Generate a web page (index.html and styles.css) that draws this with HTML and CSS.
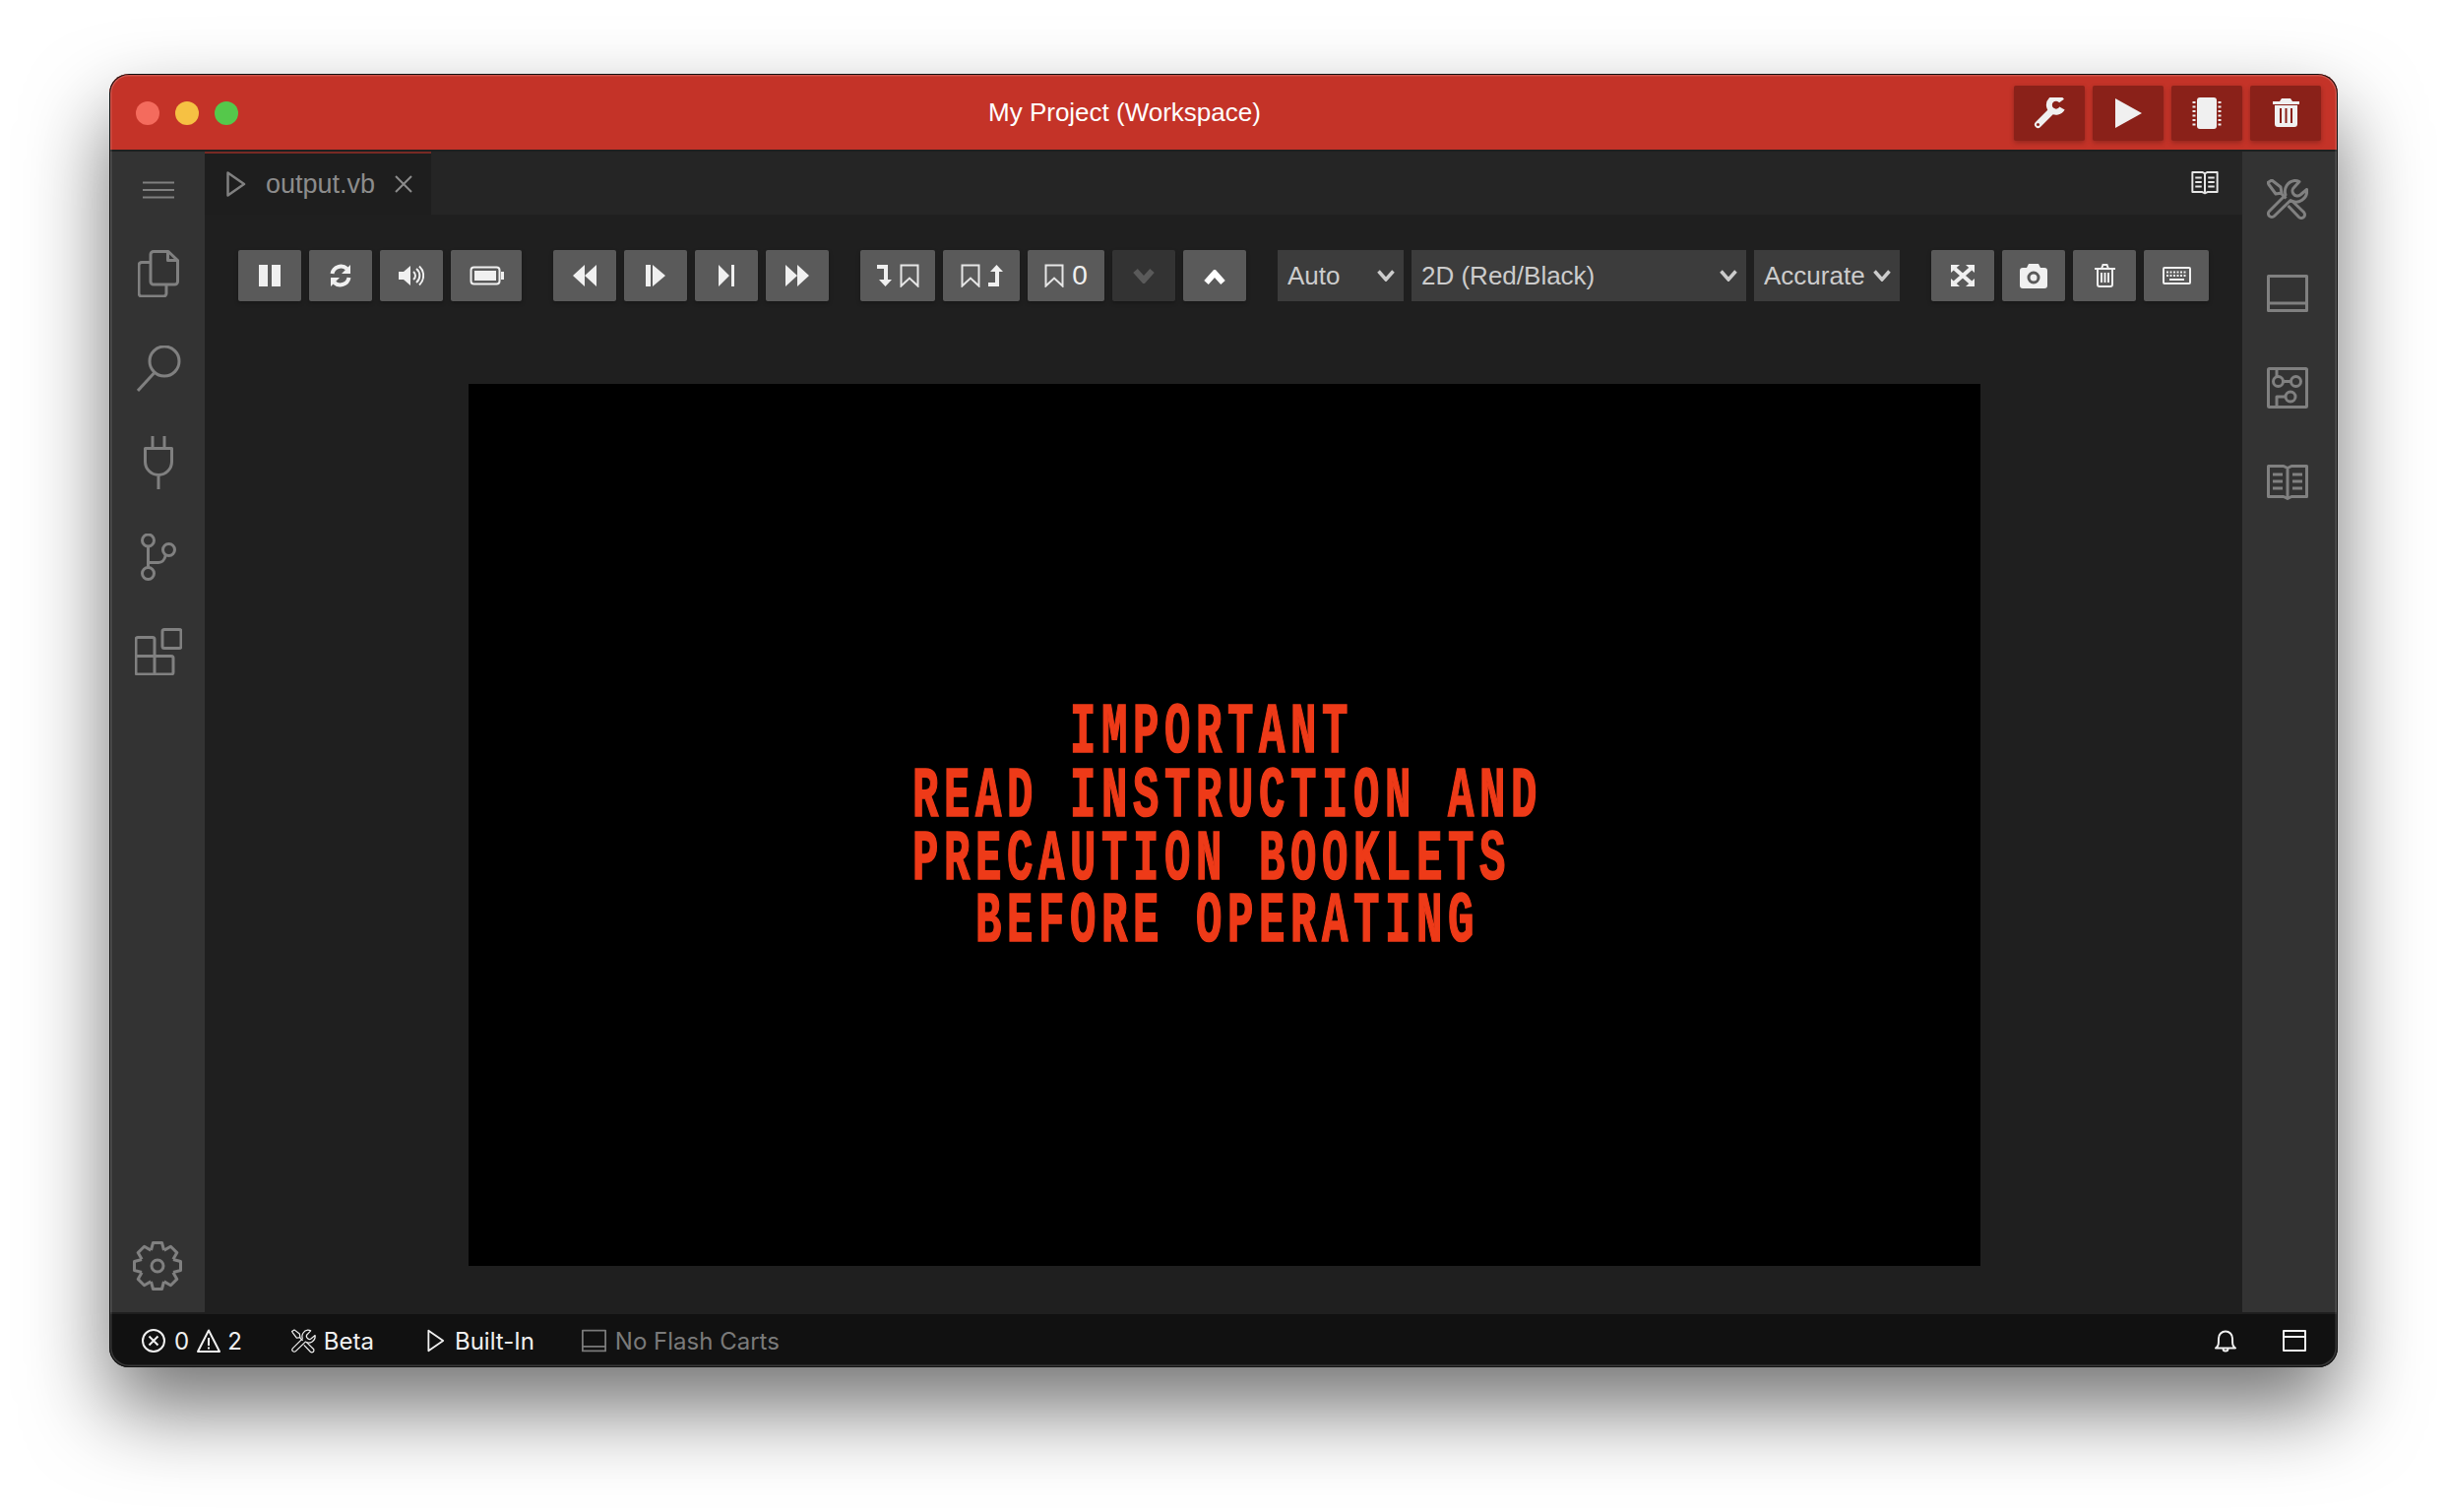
FILE: index.html
```html
<!DOCTYPE html>
<html lang="en">
<head>
    <meta charset="UTF-8">
    <meta name="viewport" content="width=device-width, initial-scale=1.0">
    <title>My Project (Workspace)</title>
    <link rel="stylesheet" href="styles.css">
</head>
<body>
    <!-- shared icons -->
    <svg class="defs" aria-hidden="true">
        <symbol id="i-tools" viewBox="0 0 42 41">
            <path d="M28 1.5A11 11 0 0 0 19 16L2.5 32.5a3.5 3.5 0 0 0 5 5L24 21.5A11 11 0 0 0 40.5 10.5L34 16a5 5 0 0 1-6-8L33 2.5A11 11 0 0 0 28 1.5Z"/>
            <path d="M1 3.5L5 1l9 7 1 6-6 1-7-9.500ZM14.500 14.500l5 5M21.500 27l11 11.500a3.500 3.500 0 0 0 5-5L26 22.500"/>
        </symbol>
        <symbol id="i-play" viewBox="0 0 20 26">
            <path d="M1.500 1.500L18 13 1.500 24.500Z"/>
        </symbol>
        <symbol id="i-panel" viewBox="0 0 42 38">
            <path d="M1.500 1.500h39v35h-39ZM1.500 29h39"/>
        </symbol>
        <symbol id="i-book" viewBox="0 0 42 37">
            <path d="M1.500 1.500H17l4 2 4-2h15.500v31H25l-4 2-4-2H1.500ZM21 3.500v31M6 10h10M6 17h10M6 24h10M26 10h10M26 17h10M26 24h10"/>
        </symbol>
        <symbol id="i-bookmark" viewBox="0 0 20 24">
            <path d="M1.500 1.500h17v21L10 14.500l-8.500 8Z"/>
        </symbol>
        <symbol id="i-chevron" viewBox="0 0 22 16">
            <path d="M2.500 3L11 12.500 19.500 3"/>
        </symbol>
    </svg>

    <div class="window">
        <header class="titlebar">
            <div class="lights">
                <span class="light light-red"></span>
                <span class="light light-yellow"></span>
                <span class="light light-green"></span>
            </div>
            <div class="title">My Project (Workspace)</div>
            <div class="title-actions">
                <button class="title-btn" type="button">
                    <svg width="32" height="32" viewBox="0 0 32 32">
                        <path class="wrench-head" d="M28.500 3.500A7 7 0 1 0 29 11"/>
                        <path class="wrench-handle" d="M17 15L4.500 27.500"/>
                        <circle class="wrench-hole" cx="4.500" cy="27.500" r="1.500"/>
                    </svg>
                </button>
                <button class="title-btn" type="button">
                    <svg width="27" height="30" viewBox="0 0 27 30"><path class="solid" d="M0 0l27 15L0 30Z"/></svg>
                </button>
                <button class="title-btn" type="button">
                    <svg width="30" height="32" viewBox="0 0 30 32">
                        <rect class="solid" x="5" y="0" width="20" height="32" rx="3"/>
                        <path class="chip-pins" d="M2 4v25M28 4v25"/>
                    </svg>
                </button>
                <button class="title-btn" type="button">
                    <svg width="27" height="29" viewBox="0 0 27 29">
                        <path class="solid" fill-rule="evenodd" d="M9 0h9l2 3h7v3H0V3h7ZM2 7h23v19a3 3 0 0 1-3 3H5a3 3 0 0 1-3-3ZM7 10v15h2V10ZM12.500 10v15h2V10ZM18 10v15h2V10Z"/>
                    </svg>
                </button>
            </div>
        </header>

        <div class="workbench">
            <nav class="activity">
                <div class="activity-item activity-menu">
                    <svg width="32" height="18" viewBox="0 0 32 18"><path d="M0 1.500h32M0 9h32M0 16.500h32"/></svg>
                </div>
                <div class="activity-item">
                    <svg width="42" height="48" viewBox="0 0 42 48">
                        <path d="M16 1.500h15l9.500 9V32a3 3 0 0 1-3 3H16a3 3 0 0 1-3-3V4.500a3 3 0 0 1 3-3ZM30.500 1.500v9h10M13 12.500H4a3 3 0 0 0-3 3V44a3 3 0 0 0 3 3h22a3 3 0 0 0 3-3v-9"/>
                    </svg>
                </div>
                <div class="activity-item">
                    <svg width="45" height="47" viewBox="0 0 45 47">
                        <circle cx="28" cy="16" r="15"/>
                        <path d="M17.500 28L1 46"/>
                    </svg>
                </div>
                <div class="activity-item">
                    <svg width="30" height="54" viewBox="0 0 30 54">
                        <path d="M9 0v12M21 0v12M1.500 12.500h27V26a13.500 13.500 0 0 1-27 0ZM15 40v14"/>
                    </svg>
                </div>
                <div class="activity-item">
                    <svg width="36" height="48" viewBox="0 0 36 48">
                        <circle cx="7.500" cy="7" r="6"/>
                        <circle cx="7.500" cy="40.500" r="6"/>
                        <circle cx="28.500" cy="16.500" r="6"/>
                        <path d="M7.500 13v21.500M8 29.500h10c4 0 6-2 7.500-8"/>
                    </svg>
                </div>
                <div class="activity-item">
                    <svg width="48" height="48" viewBox="0 0 48 48">
                        <rect x="28" y="1.500" width="19" height="19" rx="2"/>
                        <path d="M3 9.500h15a2 2 0 0 1 2 2v17h17a2 2 0 0 1 2 2V45a2 2 0 0 1-2 2H3a2 2 0 0 1-2-2V11.500a2 2 0 0 1 2-2ZM1 28.500h19V47"/>
                    </svg>
                </div>
                <div class="activity-item activity-gear">
                    <svg width="50" height="50" viewBox="-25 -25 50 50">
                        <path id="gear-tooth" d="M-6.500-16L-4.500-23.500H4.500L6.500-16"/>
                        <use href="#gear-tooth" transform="rotate(45)"/>
                        <use href="#gear-tooth" transform="rotate(90)"/>
                        <use href="#gear-tooth" transform="rotate(135)"/>
                        <use href="#gear-tooth" transform="rotate(180)"/>
                        <use href="#gear-tooth" transform="rotate(225)"/>
                        <use href="#gear-tooth" transform="rotate(270)"/>
                        <use href="#gear-tooth" transform="rotate(315)"/>
                        <circle r="6"/>
                    </svg>
                </div>
            </nav>

            <main class="editor">
                <div class="tabs">
                    <div class="tab">
                        <svg class="tab-icon" width="20" height="26"><use href="#i-play"/></svg>
                        <span class="tab-name">output.vb</span>
                        <svg class="tab-close" width="18" height="18" viewBox="0 0 18 18"><path d="M1 1l16 16M17 1L1 17"/></svg>
                    </div>
                    <svg class="tabs-book" width="28" height="24"><use href="#i-book"/></svg>
                </div>

                <div class="toolbar">
                    <div class="group">
                        <button class="btn" type="button">
                            <svg width="24" height="22" viewBox="0 0 24 22"><path class="solid" d="M1 0h9v22H1ZM14 0h9v22h-9Z"/></svg>
                        </button>
                        <button class="btn" type="button">
                            <svg width="24" height="24" viewBox="0 0 24 24">
                                <path class="line-3" d="M3.500 10a9 9 0 0 1 15-5M20.500 14a9 9 0 0 1-15 5"/>
                                <path class="solid" d="M22 1v9h-9ZM2 23v-9h9Z"/>
                            </svg>
                        </button>
                        <button class="btn" type="button">
                            <svg width="26" height="22" viewBox="0 0 26 22">
                                <path class="solid" d="M0 7h5l7-6v20l-7-6H0Z"/>
                                <path class="line-2" d="M15 7a5 5 0 0 1 0 8M18 4a9 9 0 0 1 0 14M21 1.500a13 13 0 0 1 0 19"/>
                            </svg>
                        </button>
                        <button class="btn btn-wide" type="button">
                            <svg width="35" height="20" viewBox="0 0 35 20">
                                <rect class="line-2" x="1.500" y="1.500" width="29" height="17" rx="3"/>
                                <rect class="solid" x="5" y="5" width="22" height="10"/>
                                <rect class="solid" x="32" y="6" width="3" height="8"/>
                            </svg>
                        </button>
                    </div>

                    <div class="group">
                        <button class="btn" type="button">
                            <svg width="24" height="22" viewBox="0 0 24 22"><path class="solid" d="M12 0L0 11l12 11ZM24 0L12 11l12 11Z"/></svg>
                        </button>
                        <button class="btn" type="button">
                            <svg width="20" height="22" viewBox="0 0 20 22"><path class="solid" d="M0 0h5v22H0ZM7 0l13 11L7 22Z"/></svg>
                        </button>
                        <button class="btn" type="button">
                            <svg width="16" height="22" viewBox="0 0 16 22"><path class="solid" d="M0 0l11 11L0 22ZM13 0h3v22h-3Z"/></svg>
                        </button>
                        <button class="btn" type="button">
                            <svg width="24" height="22" viewBox="0 0 24 22"><path class="solid" d="M0 0l12 11L0 22ZM12 0l12 11-12 11Z"/></svg>
                        </button>
                    </div>

                    <div class="group">
                        <button class="btn btn-bm" type="button">
                            <svg width="15" height="22" viewBox="0 0 15 22"><path class="solid" d="M0 0h11v15h4L8.500 22 2 15h5V4H0Z"/></svg>
                            <svg class="bm" width="20" height="24"><use href="#i-bookmark"/></svg>
                        </button>
                        <button class="btn btn-bm-wide" type="button">
                            <svg class="bm" width="20" height="24"><use href="#i-bookmark"/></svg>
                            <svg width="15" height="22" viewBox="0 0 15 22"><path class="solid" d="M15 7h-4v15H0v-4h7V7H2l6.500-7Z"/></svg>
                        </button>
                        <button class="btn btn-bm-wide" type="button">
                            <svg class="bm" width="20" height="24"><use href="#i-bookmark"/></svg>
                            <span class="btn-count">0</span>
                        </button>
                        <button class="btn btn-dim" type="button">
                            <svg class="chevron" width="22" height="16"><use href="#i-chevron"/></svg>
                        </button>
                        <button class="btn" type="button">
                            <svg class="chevron chevron-up" width="22" height="16"><use href="#i-chevron"/></svg>
                        </button>
                    </div>

                    <div class="group">
                        <select class="select select-auto"><option>Auto</option></select>
                        <select class="select select-mode"><option>2D (Red/Black)</option></select>
                        <select class="select select-accuracy"><option>Accurate</option></select>
                    </div>

                    <div class="group">
                        <button class="btn" type="button">
                            <svg width="24" height="22" viewBox="0 0 24 22">
                                <path class="line-3" d="M4 4l16 14M20 4L4 18"/>
                                <path class="solid" d="M0 0h9L0 8ZM24 0h-9l9 8ZM0 22h9L0 14ZM24 22h-9l9-8Z"/>
                            </svg>
                        </button>
                        <button class="btn" type="button">
                            <svg width="28" height="25" viewBox="0 0 28 25">
                                <path class="solid" fill-rule="evenodd" d="M9 0h10l2 4h4a3 3 0 0 1 3 3v15a3 3 0 0 1-3 3H3a3 3 0 0 1-3-3V7a3 3 0 0 1 3-3h4ZM14 7.500a6.500 6.500 0 1 0 0 13 6.500 6.500 0 0 0 0-13ZM14 10.500a3.500 3.500 0 1 1 0 7 3.500 3.500 0 0 1 0-7Z"/>
                            </svg>
                        </button>
                        <button class="btn" type="button">
                            <svg width="21" height="24" viewBox="0 0 21 24">
                                <path class="line-2" d="M0 5h21M7 5l1.500-4h4L14 5M3 5v16a2 2 0 0 0 2 2h11a2 2 0 0 0 2-2V5M7 9v10M10.500 9v10M14 9v10"/>
                            </svg>
                        </button>
                        <button class="btn btn-keys" type="button">
                            <svg width="29" height="18" viewBox="0 0 29 18">
                                <rect class="line-2" x="1" y="1" width="27" height="16" rx="1"/>
                                <path class="line-2 dashes" d="M4 5.500h21M4 9h21"/>
                                <path class="line-2" d="M7 13h15"/>
                            </svg>
                        </button>
                    </div>
                </div>

                <div class="stage">
                    <div class="screen">
                        <pre class="screen-text">     IMPORTANT
READ INSTRUCTION AND
PRECAUTION BOOKLETS
  BEFORE OPERATING</pre>
                    </div>
                </div>
            </main>

            <aside class="sidebar">
                <div class="activity-item activity-item-right"><svg width="42" height="41"><use href="#i-tools"/></svg></div>
                <div class="activity-item activity-item-right"><svg width="42" height="38"><use href="#i-panel"/></svg></div>
                <div class="activity-item activity-item-right">
                    <svg width="42" height="42" viewBox="0 0 42 42">
                        <rect x="1.500" y="1.500" width="39" height="39" rx="1"/>
                        <circle cx="11.500" cy="14.500" r="5"/>
                        <circle cx="29.500" cy="14.500" r="5"/>
                        <circle cx="24" cy="30" r="5"/>
                        <path d="M10 1.500v8M16.500 14.500h8M19 30h-9v10.500"/>
                    </svg>
                </div>
                <div class="activity-item activity-item-right"><svg width="42" height="37"><use href="#i-book"/></svg></div>
            </aside>
        </div>

        <footer class="statusbar">
            <div class="status-item status-problems">
                <svg width="24" height="24" viewBox="0 0 24 24"><circle cx="12" cy="12" r="11"/><path d="M7.500 7.500l9 9M16.500 7.500l-9 9"/></svg>
                <span>0</span>
                <svg class="warn" width="24" height="24" viewBox="0 0 24 24"><path d="M12 1.500L23 23H1ZM12 9v8M12 18.500v2"/></svg>
                <span>2</span>
            </div>
            <div class="status-item status-beta">
                <svg width="25" height="25"><use href="#i-tools"/></svg>
                <span>Beta</span>
            </div>
            <div class="status-item status-builtin">
                <svg width="18" height="24"><use href="#i-play"/></svg>
                <span>Built-In</span>
            </div>
            <div class="status-item status-flash">
                <svg width="25" height="24"><use href="#i-panel"/></svg>
                <span>No Flash Carts</span>
            </div>
            <div class="status-right">
                <svg width="22" height="24" viewBox="0 0 22 24"><path d="M1 19.500c3-2 3-4 3-10a7 7 0 0 1 14 0c0 6 0 8 3 10ZM8.500 20a2.500 2.500 0 0 0 5 0"/></svg>
                <svg width="24" height="22" viewBox="0 0 24 22"><path d="M1 1h22v20H1ZM1 7h22"/></svg>
            </div>
        </footer>
    </div>
</body>
</html>
```

FILE: styles.css
```css
* {
    box-sizing: border-box;
}

html, body {
    margin: 0;
    padding: 0;
}

body {
    width: 2486px;
    height: 1536px;
    padding: 75px 111px 0 111px;
    background-color: #fff;
    font-family: "Liberation Sans", Arial, sans-serif;
    overflow: hidden;
}

.defs {
    display: none;
}

svg {
    display: block;
    flex: none;
}

.window {
    position: relative;
    display: flex;
    flex-direction: column;
    height: 1314px;
    border-radius: 20px;
    background-color: #1e1e1e;
    overflow: hidden;
    box-shadow: 0 42px 84px rgba(0, 0, 0, 0.55);
}

.window::after {
    content: "";
    position: absolute;
    inset: 0;
    border-radius: 20px;
    box-shadow: inset 0 0 0 1px #111, inset 0 0 0 2.5px rgba(255, 255, 255, 0.16);
    pointer-events: none;
}

/* title bar */
.titlebar {
    display: flex;
    align-items: center;
    height: 77px;
    flex: none;
    padding: 2px 17px 0 27px;
    background-color: #c43328;
}

.lights {
    display: flex;
    gap: 16px;
}

.light {
    width: 24px;
    height: 24px;
    border-radius: 50%;
}

.light-red { background-color: #f46b5d; }
.light-yellow { background-color: #f6c143; }
.light-green { background-color: #55c84b; }

.title {
    margin-left: 762px;
    font-size: 26px;
    color: #fff;
    white-space: nowrap;
}

.title-actions {
    display: flex;
    gap: 8px;
    margin-left: auto;
}

.title-btn {
    display: flex;
    align-items: center;
    justify-content: center;
    width: 72px;
    height: 56px;
    padding: 0;
    border: none;
    border-radius: 2px;
    background-color: #8a2119;
    box-shadow: 0 2px 5px rgba(0, 0, 0, 0.25);
}

.solid {
    fill: #f0f0f0;
    stroke: none;
}

.line-2, .line-3 {
    fill: none;
    stroke: #f0f0f0;
    stroke-width: 2;
}

.line-3 {
    stroke-width: 4;
}

.dashes {
    stroke-dasharray: 2 1.500;
}

.wrench-head {
    fill: none;
    stroke: #f0f0f0;
    stroke-width: 6;
}

.wrench-handle {
    fill: none;
    stroke: #f0f0f0;
    stroke-width: 7;
    stroke-linecap: round;
}

.wrench-hole {
    fill: #8a2119;
}

.chip-pins {
    fill: none;
    stroke: #f0f0f0;
    stroke-width: 3;
    stroke-dasharray: 2 2.500;
}

/* main area */
.workbench {
    display: flex;
    flex: 1;
    min-height: 0;
    padding: 2px 0;
    background-color: #1f1f1f;
}

.activity, .sidebar {
    display: flex;
    flex-direction: column;
    flex: none;
    width: 97px;
    background-color: #333;
}

.activity-item {
    display: flex;
    align-items: center;
    justify-content: center;
    height: 96px;
    padding-left: 3px;
    flex: none;
}

.activity-item svg, .activity-item use, .tabs-book, .tab-icon, .status-item svg, .status-right svg {
    fill: none;
    stroke-linejoin: round;
}

.activity-item svg {
    stroke: #808080;
    stroke-width: 3;
}

.activity-menu {
    height: 76px;
    padding-top: 2px;
}

.activity-menu svg {
    stroke-width: 2;
}

.activity-gear {
    margin-top: auto;
    padding: 2px 0 0 1px;
}

.activity-item-right {
    padding: 0 5px 0 0;
}

/* editor */
.editor {
    display: flex;
    flex-direction: column;
    flex: 1;
    min-width: 0;
}

.tabs {
    display: flex;
    align-items: center;
    height: 64px;
    flex: none;
    padding-right: 24px;
    background-color: #252525;
}

.tab {
    display: flex;
    align-items: center;
    width: 230px;
    height: 64px;
    padding: 0 0 0 22px;
    border-top: 2px solid #772a24;
    background-color: #1e1e1e;
    color: #8c8c8c;
}

.tab-icon {
    stroke: #808080;
    stroke-width: 2.500;
}

.tab-name {
    margin-left: 20px;
    font-size: 27px;
}

.tab-close {
    margin-left: 20px;
    fill: none;
    stroke: #8c8c8c;
    stroke-width: 2;
}

.tabs-book {
    margin-left: auto;
    stroke: #e6e6e6;
    stroke-width: 3;
}

.toolbar {
    display: flex;
    gap: 32px;
    margin-top: 36px;
    padding-left: 34px;
}

.group {
    display: flex;
    gap: 8px;
}

.btn {
    display: flex;
    align-items: center;
    justify-content: center;
    gap: 8px;
    width: 64px;
    height: 52px;
    padding: 0;
    border: none;
    border-radius: 2px;
    background-color: #5a5a5a;
    box-shadow: 0 2px 4px rgba(0, 0, 0, 0.25);
}

.btn-wide {
    width: 72px;
}

.btn-keys {
    width: 66px;
}

.btn-bm {
    width: 76px;
}

.btn-bm-wide {
    width: 78px;
}

.btn-dim {
    background-color: #333;
}

.bm {
    fill: none;
    stroke: #e6e6e6;
    stroke-width: 2;
}

.btn-count {
    font-family: "Liberation Sans", Arial, sans-serif;
    font-size: 28px;
    color: #f0f0f0;
}

.chevron {
    fill: none;
    stroke: #fff;
    stroke-width: 6;
}

.btn-dim .chevron {
    stroke: #5a5a5a;
}

.chevron-up {
    margin-top: 3px;
    transform: scaleY(-1);
}

.select {
    height: 52px;
    padding: 0 0 0 10px;
    border: none;
    border-radius: 0;
    appearance: none;
    font-family: "Liberation Sans", Arial, sans-serif;
    font-size: 26px;
    color: #ccc;
    background-color: #3c3c3c;
    background-image: url("data:image/svg+xml,%3Csvg xmlns='http://www.w3.org/2000/svg' width='18' height='12'%3E%3Cpath d='M1.500 1.500L9 10l7.500-8.500' fill='none' stroke='%23ccc' stroke-width='3.500'/%3E%3C/svg%3E");
    background-repeat: no-repeat;
    background-position: right 9px center;
}

.select-auto { width: 128px; }
.select-mode { width: 340px; }
.select-accuracy { width: 148px; }

.stage {
    display: flex;
    margin-top: 84px;
    padding-left: 268px;
}

/* the game picture, 384x224 at 4x */
.screen {
    width: 1536px;
    height: 896px;
    padding: 323px 0 0 451px;
    background-color: #000;
}

.screen-text {
    margin: 0;
    font-family: "Liberation Mono", monospace;
    font-weight: bold;
    font-size: 44px;
    line-height: 38.8px;
    letter-spacing: 5.6px;
    color: #ee3a18;
    -webkit-text-stroke: 1px #ee3a18;
    transform: scaleY(1.65);
    transform-origin: top left;
}

/* status bar */
.statusbar {
    display: flex;
    align-items: center;
    height: 54px;
    flex: none;
    padding: 0 32px 0 33px;
    background-color: #111;
    font-family: Inter, "Liberation Sans", sans-serif;
    font-size: 24px;
    color: #f0f0f0;
}

.status-item {
    display: flex;
    align-items: center;
}

.status-item svg, .status-right svg {
    stroke: #f0f0f0;
    stroke-width: 2;
}

.status-problems span {
    margin-left: 9px;
}

.status-problems .warn {
    margin-left: 8px;
}

.status-problems .warn + span {
    margin-left: 7px;
}

.status-beta {
    margin-left: 50px;
    gap: 8px;
}

.status-builtin {
    margin-left: 54px;
    gap: 10px;
}

.status-flash {
    margin-left: 48px;
    gap: 9px;
    color: #7a7a7a;
}

.status-flash svg {
    stroke: #7a7a7a;
    stroke-width: 3;
}

.status-right {
    display: flex;
    align-items: center;
    gap: 47px;
    margin-left: auto;
}
```
